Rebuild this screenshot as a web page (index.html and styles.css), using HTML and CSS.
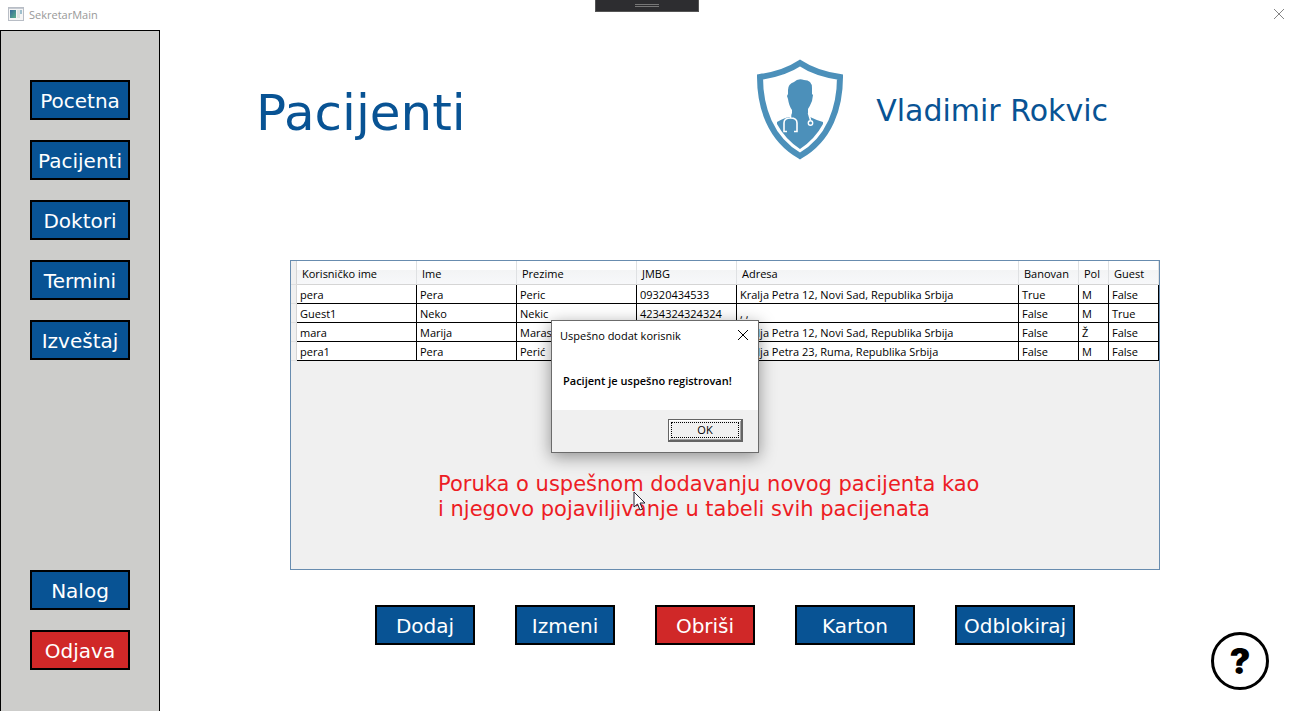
FILE: index.html
```html
<!DOCTYPE html>
<html lang="sr-Latn">
<head>
<meta charset="utf-8">
<meta name="viewport" content="width=device-width, initial-scale=1">
<title>SekretarMain</title>
<link rel="stylesheet" href="styles.css">
</head>
<body class="window">
<header class="titlebar">
  <svg class="app-icon" width="16" height="14" viewBox="0 0 16 14" aria-hidden="true">
    <defs><linearGradient id="app" x1="0" y1="0" x2="1" y2="1"><stop offset="0" stop-color="#35689a"/><stop offset="1" stop-color="#5db08a"/></linearGradient></defs>
    <rect x=".5" y=".5" width="15" height="13" fill="#f5f5f5" stroke="#b8bdc5"/>
    <path d="M1 1.5h14" stroke="#c5cad2"/>
    <rect x="2" y="3" width="6" height="8" fill="url(#app)"/>
    <rect x="9" y="3" width="3" height="8" fill="#dfe3e2"/>
    <rect x="12" y="3" width="2" height="4" fill="#9fc0ce"/>
  </svg>
  <span class="titlebar-text">SekretarMain</span>
  <button class="window-close" type="button" aria-label="Zatvori prozor">
    <svg width="12" height="12" viewBox="0 0 12 12"><path d="M1 1l10 10M11 1L1 11" stroke="#858585" fill="none"/></svg>
  </button>
  <div class="debug-grip"><span class="grip-lines"></span></div>
</header>
<div class="workspace">
  <nav class="sidebar">
    <button class="btn" type="button">Pocetna</button>
    <button class="btn" type="button">Pacijenti</button>
    <button class="btn" type="button">Doktori</button>
    <button class="btn" type="button">Termini</button>
    <button class="btn" type="button">Izveštaj</button>
    <button class="btn btn-account" type="button">Nalog</button>
    <button class="btn btn-danger" type="button">Odjava</button>
  </nav>
  <main class="content">
    <div class="page-head">
      <h1 class="page-title">Pacijenti</h1>
      <div class="user">
        <svg class="shield" width="88" height="102" viewBox="0 0 88 102" aria-hidden="true">
          <path d="M44 4C32 12 18 16 4 18C4 48 14 80 44 97C74 80 84 48 84 18C70 16 56 12 44 4Z" fill="#fff" stroke="#4c90ba" stroke-width="6"/>
          <path d="M32 31Q32 25 38 23Q42 19 48 21Q56 21 56 29V35L57 36L56 42Q54 47 52 50V54L54 58Q60 61 67 63V65Q59 80 44 90Q29 80 21 65V63Q30 58 34 58L36 54V51Q33 47 32 40L31 37L32 35Z" fill="#4c90ba"/>
          <path d="M34.500 54V59M31 72.500H28V64Q28 59 34.500 59Q41 59 41 64V72.500H38M52.500 54L54.500 61" fill="none" stroke="#fff" stroke-width="1.600"/>
          <circle cx="54.500" cy="64" r="2.200" fill="#4c90ba" stroke="#fff" stroke-width="1.400"/>
        </svg>
        <span class="user-name">Vladimir Rokvic</span>
      </div>
    </div>
    <section class="grid-panel">
      <table class="patients">
        <colgroup><col class="w-handle"><col class="w-120"><col class="w-100"><col class="w-120"><col class="w-100"><col><col class="w-60"><col class="w-30"><col class="w-50"></colgroup>
        <thead>
          <tr><td class="handle"></td><th>Korisničko ime</th><th>Ime</th><th>Prezime</th><th>JMBG</th><th>Adresa</th><th>Banovan</th><th>Pol</th><th>Guest</th></tr>
        </thead>
        <tbody>
          <tr><td class="handle"></td><td>pera</td><td>Pera</td><td>Peric</td><td>09320434533</td><td>Kralja Petra 12, Novi Sad, Republika Srbija</td><td>True</td><td>M</td><td>False</td></tr>
          <tr><td class="handle"></td><td>Guest1</td><td>Neko</td><td>Nekic</td><td>4234324324324</td><td>, ,</td><td>False</td><td>M</td><td>True</td></tr>
          <tr><td class="handle"></td><td>mara</td><td>Marija</td><td>Maras</td><td></td><td>Kralja Petra 12, Novi Sad, Republika Srbija</td><td>False</td><td>Ž</td><td>False</td></tr>
          <tr><td class="handle"></td><td>pera1</td><td>Pera</td><td>Perić</td><td></td><td>Kralja Petra 23, Ruma, Republika Srbija</td><td>False</td><td>M</td><td>False</td></tr>
        </tbody>
      </table>
      <p class="note">Poruka o uspešnom dodavanju novog pacijenta kao<br>i njegovo pojaviljivanje u tabeli svih pacijenata</p>
      <svg class="cursor" width="13" height="20" viewBox="0 0 13 20" aria-hidden="true"><path d="M1 1V16L4.500 13L7 19L9.500 18L7 12H12Z" fill="#fff" stroke="#223" stroke-width="1"/></svg>
      <div class="dialog" role="dialog" aria-labelledby="dialog-title">
        <div class="dialog-head">
          <span id="dialog-title">Uspešno dodat korisnik</span>
          <button class="dialog-close" type="button" aria-label="Zatvori">
            <svg width="12" height="12" viewBox="0 0 12 12"><path d="M1 1l10 10M11 1L1 11" stroke="#000" fill="none"/></svg>
          </button>
        </div>
        <p class="dialog-text">Pacijent je uspešno registrovan!</p>
        <div class="dialog-foot"><button class="dialog-ok" type="button"><span class="ok-focus">OK</span></button></div>
      </div>
    </section>
    <div class="actions">
      <button class="btn" type="button">Dodaj</button>
      <button class="btn" type="button">Izmeni</button>
      <button class="btn btn-danger" type="button">Obriši</button>
      <button class="btn btn-wide" type="button">Karton</button>
      <button class="btn btn-wide" type="button">Odblokiraj</button>
    </div>
    <button class="help" type="button" aria-label="Pomoć">?</button>
  </main>
</div>
</body>
</html>
```
FILE: styles.css
```css
* { box-sizing: border-box; }

.window {
  margin: 0;
  min-height: 100vh;
  display: flex;
  flex-direction: column;
  background: #fff;
  color: #000;
  font-family: "Open Sans", "Noto Sans", sans-serif;
  font-size: 11px;
}

button { font-family: inherit; cursor: pointer; }

/* Title bar */
.titlebar {
  position: relative;
  height: 30px;
  display: flex;
  align-items: center;
  padding: 0 9px 2px 8px;
  gap: 5px;
  flex: none;
}
.titlebar-text { color: #999; }
.window-close {
  margin-left: auto;
  padding: 0;
  border: 0;
  background: none;
  display: flex;
}
.debug-grip {
  position: absolute;
  top: 0;
  left: 50%;
  transform: translateX(-50%);
  width: 104px;
  height: 12px;
  display: flex;
  justify-content: center;
  align-items: center;
  background: #2d2d30;
  border: 1px solid #555;
  border-top: 0;
}
.grip-lines {
  width: 24px;
  height: 3px;
  border: solid #777;
  border-width: 1px 0;
}

/* Layout */
.workspace { flex: 1; display: flex; }
.sidebar {
  flex: none;
  width: 160px;
  display: flex;
  flex-direction: column;
  align-items: center;
  gap: 20px;
  padding: 49px 0 41px;
  background: #cdcdcb;
  border: 1px solid #000;
  border-bottom: 0;
}
.content {
  position: relative;
  flex: 1;
  min-width: 0;
  display: flex;
  flex-direction: column;
  padding: 29px 134px 66px 130px;
}

/* Buttons */
.btn {
  width: 100px;
  height: 40px;
  flex: none;
  padding: 2px 0 0;
  border: 2px solid #000;
  background: #085394;
  color: #fff;
  font-family: "DejaVu Sans", sans-serif;
  font-size: 20px;
  white-space: nowrap;
}
.btn-wide { width: 120px; }
.btn-danger { background: #d02828; }
.btn-account { margin-top: auto; }

/* Header */
.page-head {
  display: flex;
  justify-content: space-between;
  color: #085394;
  font-family: "DejaVu Sans", sans-serif;
  padding-right: 52px;
  margin: 0 0 99px -34px;
}
.page-title {
  margin: 24px 0 0;
  font-size: 50px;
  font-weight: 400;
  line-height: 60px;
}
.user { display: flex; align-items: center; gap: 32px; }
.user-name { font-size: 30px; }

/* Patients grid */
.grid-panel {
  position: relative;
  flex: 1;
  min-height: 310px;
  background: #f0f0f0;
  border: 1px solid #688caf;
}
.patients {
  width: 100%;
  table-layout: fixed;
  border-collapse: separate;
  border-spacing: 0;
}
.w-handle { width: 6px; }
.w-120 { width: 120px; }
.w-100 { width: 100px; }
.w-60 { width: 60px; }
.w-30 { width: 30px; }
.w-50 { width: 50px; }
.patients th {
  height: 24px;
  padding: 2px 0 0 5px;
  text-align: left;
  font-weight: 400;
  line-height: 18px;
  background: linear-gradient(#fff 40%, #f3f4f5 41%, #f7f8fa);
  border-right: 1px solid #dfe1e3;
  border-bottom: 1px solid #d5d5d5;
}
.patients td {
  height: 19px;
  padding: 2px 0 0 3px;
  line-height: 16px;
  white-space: nowrap;
  background: #fff;
  border-right: 1px solid #000;
  border-bottom: 1px solid #000;
}
.patients .handle {
  padding: 0;
  background: #f0f0f0;
  border-right: 1px solid #d5d5d5;
  border-bottom: 1px solid #e0e0e0;
}
.note {
  margin: 111px 0 0 147px;
  color: #ed1c24;
  font-family: "DejaVu Sans", sans-serif;
  font-size: 21px;
  line-height: 25px;
  white-space: nowrap;
}
.cursor { position: absolute; left: 342px; top: 230px; }

/* Message box */
.dialog {
  position: absolute;
  left: 260px;
  top: 59px;
  width: 208px;
  background: #fff;
  border: 1px solid #6b6b6b;
  box-shadow: 0 4px 16px rgba(0, 0, 0, .4);
}
.dialog-head {
  height: 30px;
  display: flex;
  align-items: center;
  justify-content: space-between;
  padding: 0 9px 2px 8px;
}
.dialog-close { padding: 0; border: 0; background: none; display: flex; }
.dialog-text {
  margin: 0;
  padding: 22px 11px 21px;
  font-weight: 600;
  line-height: 16px;
  white-space: nowrap;
}
.dialog-foot {
  height: 42px;
  padding: 9px 15px;
  display: flex;
  justify-content: flex-end;
  background: #f0f0f0;
}
.dialog-ok {
  width: 75px;
  height: 23px;
  padding: 2px;
  font-size: 11px;
  color: #000;
  background: #f0f0f0;
  border: 1px solid #646464;
  border-right-width: 2px;
  border-bottom-width: 2px;
  box-shadow: inset 1px 1px #fff, inset -1px -1px #a0a0a0;
}
.ok-focus {
  display: block;
  height: 16px;
  line-height: 14px;
  border: 1px dotted #000;
}

.actions { display: flex; gap: 40px; margin: 35px 0 0 85px; }

.help {
  position: absolute;
  right: 25px;
  bottom: 21px;
  width: 58px;
  height: 58px;
  padding: 0;
  border: 3px solid #000;
  border-radius: 50%;
  background: #fff;
  color: #000;
  font: 900 35px/52px Inter, "Liberation Sans", sans-serif;
}
```
